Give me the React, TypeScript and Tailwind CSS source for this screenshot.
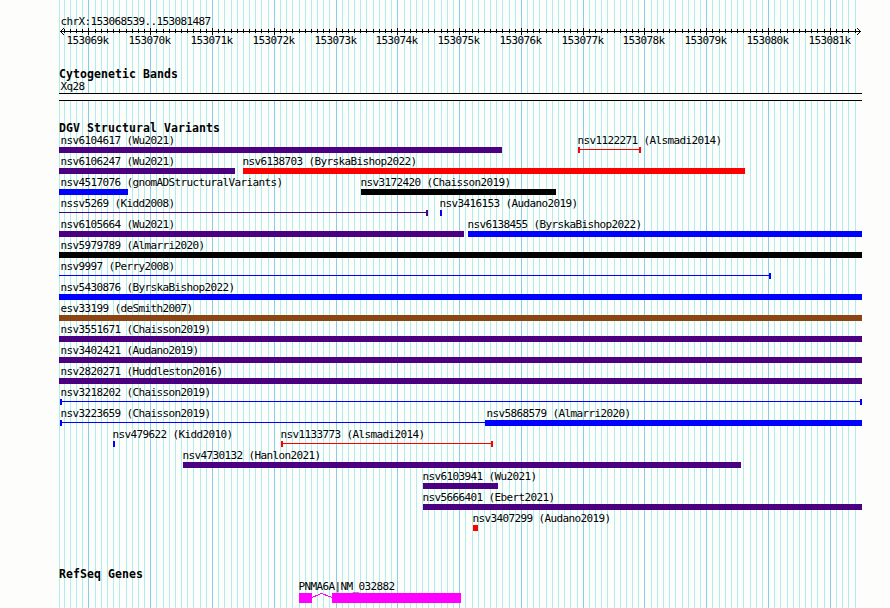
import React from 'react';

interface Feature {
  name: string;
  start: number;
  end: number;
  color: string;
  shape?: 'bar' | 'line';
  capLeft?: boolean;
  capRight?: boolean;
  labelShift?: number;
}

const LEFT = 59;
const RIGHT = 862;

const PURPLE = 'bg-[#4b0082]';
const BLUE = 'bg-[#0000ff]';
const RED = 'bg-[#ff0000]';
const BLACK = 'bg-black';
const BROWN = 'bg-[#8b4513]';

// one entry per 100 bp, starting at 153068500
const gridLines = Array.from({ length: 130 }, (_, i) => {
  const k = i - 5;
  return {
    x: Math.max(LEFT, Math.floor(88.97 + 6.178 * k)),
    major: k % 10 === 0,
    label: `${153069 + k / 10}k`,
  };
});

const majorLines = gridLines.filter((line) => line.major);

const lanes: Feature[][] = [
  [
    { name: 'nsv6104617 (Wu2021)', start: 59, end: 502, color: PURPLE, labelShift: 1.4 },
    { name: 'nsv1122271 (Alsmadi2014)', start: 578, end: 641, color: RED, shape: 'line', capLeft: true, capRight: true },
  ],
  [
    { name: 'nsv6106247 (Wu2021)', start: 59, end: 235, color: PURPLE, labelShift: 1.4 },
    { name: 'nsv6138703 (ByrskaBishop2022)', start: 243, end: 745, color: RED },
  ],
  [
    { name: 'nsv4517076 (gnomADStructuralVariants)', start: 59, end: 128, color: BLUE, labelShift: 1.4 },
    { name: 'nsv3172420 (Chaisson2019)', start: 361, end: 556, color: BLACK },
  ],
  [
    { name: 'nssv5269 (Kidd2008)', start: 59, end: 428, color: PURPLE, shape: 'line', capRight: true, labelShift: 1.4 },
    { name: 'nsv3416153 (Audano2019)', start: 440, end: 442, color: BLUE },
  ],
  [
    { name: 'nsv6105664 (Wu2021)', start: 59, end: 464, color: PURPLE, labelShift: 1.4 },
    { name: 'nsv6138455 (ByrskaBishop2022)', start: 468, end: 862, color: BLUE },
  ],
  [{ name: 'nsv5979789 (Almarri2020)', start: 59, end: 862, color: BLACK, labelShift: 1.4 }],
  [{ name: 'nsv9997 (Perry2008)', start: 59, end: 771, color: BLUE, shape: 'line', capRight: true, labelShift: 1.4 }],
  [{ name: 'nsv5430876 (ByrskaBishop2022)', start: 59, end: 862, color: BLUE, labelShift: 1.4 }],
  [{ name: 'esv33199 (deSmith2007)', start: 59, end: 862, color: BROWN, labelShift: 1.4 }],
  [{ name: 'nsv3551671 (Chaisson2019)', start: 59, end: 862, color: PURPLE, labelShift: 1.4 }],
  [{ name: 'nsv3402421 (Audano2019)', start: 59, end: 862, color: PURPLE, labelShift: 1.4 }],
  [{ name: 'nsv2820271 (Huddleston2016)', start: 59, end: 862, color: PURPLE, labelShift: 1.4 }],
  [{ name: 'nsv3218202 (Chaisson2019)', start: 60, end: 862, color: BLUE, shape: 'line', capLeft: true, capRight: true, labelShift: 0.4 }],
  [
    { name: 'nsv3223659 (Chaisson2019)', start: 60, end: 485, color: BLUE, shape: 'line', capLeft: true, labelShift: 0.4 },
    { name: 'nsv5868579 (Almarri2020)', start: 485, end: 862, color: BLUE, labelShift: 1.4 },
  ],
  [
    { name: 'nsv479622 (Kidd2010)', start: 113, end: 115, color: BLUE },
    { name: 'nsv1133773 (Alsmadi2014)', start: 281, end: 493, color: RED, shape: 'line', capLeft: true, capRight: true },
  ],
  [{ name: 'nsv4730132 (Hanlon2021)', start: 183, end: 741, color: PURPLE }],
  [{ name: 'nsv6103941 (Wu2021)', start: 423, end: 498, color: PURPLE }],
  [{ name: 'nsv5666401 (Ebert2021)', start: 423, end: 862, color: PURPLE }],
  [{ name: 'nsv3407299 (Audano2019)', start: 473, end: 478, color: RED }],
];

function Grid() {
  return (
    <svg className="absolute inset-0" width="890" height="608" shapeRendering="crispEdges">
      {gridLines.map((line) => (
        <rect key={line.x} x={line.x} y="0" width="1" height="608" fill={line.major ? '#87ceeb' : '#afeeee'} />
      ))}
    </svg>
  );
}

function Ruler() {
  return (
    <svg className="block" width="890" height="7" shapeRendering="crispEdges">
      <rect x="60" y="3" width="801" height="1" />
      {gridLines.slice(1).map((line) => (
        <rect key={line.x} x={line.x} y={line.major ? 0 : 1} width="1" height={line.major ? 7 : 4} />
      ))}
      {[1, 2, 3].map((d) => (
        <g key={d}>
          <rect x={60 + d} y={3 - d} width="1" height="1" />
          <rect x={60 + d} y={3 + d} width="1" height="1" />
          <rect x={860 - d} y={3 - d} width="1" height="1" />
          <rect x={860 - d} y={3 + d} width="1" height="1" />
        </g>
      ))}
    </svg>
  );
}

// labels are centred on their major line, 21.5px to each side
function RulerLabels() {
  return (
    <div className="flex h-[13px]">
      {majorLines.map((line, i) => (
        <span
          key={line.x}
          className="shrink-0 w-0 whitespace-nowrap"
          style={{ marginLeft: line.x - (i === 0 ? 21.5 : majorLines[i - 1].x) }}
        >
          {line.label}
        </span>
      ))}
    </div>
  );
}

function TrackTitle({ children }: { children: React.ReactNode }) {
  return (
    <h2 className="pl-[59px] h-[13px] leading-[13px] text-[11.5px] tracking-[0.077px] font-bold whitespace-nowrap">
      {children}
    </h2>
  );
}

function Glyph({ feature }: { feature: Feature }) {
  if (feature.shape === 'line') {
    return (
      <div className="flex h-[6px]">
        {feature.capLeft && <div className={`w-[2px] h-[6px] ${feature.color}`} />}
        <div className={`flex-1 h-px mt-[2px] ${feature.color}`} />
        {feature.capRight && <div className={`w-[2px] h-[6px] ${feature.color}`} />}
      </div>
    );
  }
  return <div className={`h-[6px] ${feature.color}`} />;
}

function Lane({ features }: { features: Feature[] }) {
  return (
    <div className="flex h-[21px]">
      {features.map((feature, i) => (
        <div
          key={feature.name}
          className="shrink-0"
          style={{
            width: feature.end - feature.start,
            marginLeft: feature.start - (i === 0 ? 0 : features[i - 1].end),
          }}
        >
          <div className="h-[13px] whitespace-nowrap" style={{ marginLeft: feature.labelShift ?? -0.6 }}>
            {feature.name}
          </div>
          <Glyph feature={feature} />
        </div>
      ))}
    </div>
  );
}

export default function App() {
  return (
    <div className="relative w-[890px] h-[608px] overflow-hidden bg-[#fdfefc] text-black font-['DejaVu_Sans_Mono','Liberation_Mono',monospace] text-[11px] leading-[13px] tracking-[-0.622px]">
      <Grid />
      <div className="relative flex flex-col">
        <div className="mt-[15px] h-[13px] pl-[60.4px]">chrX:153068539..153081487</div>
        <Ruler />
        <div className="-mt-px">
          <RulerLabels />
        </div>

        <div className="mt-[21px]">
          <TrackTitle>Cytogenetic Bands</TrackTitle>
          <div className="-mt-px h-[13px] pl-[60.4px]">Xq28</div>
          <div
            className="h-[8px] border-y border-black bg-[#fdfefc]"
            style={{ marginLeft: LEFT, width: RIGHT - LEFT }}
          />
        </div>

        <div className="mt-[21px]">
          <TrackTitle>DGV Structural Variants</TrackTitle>
          <div className="-mt-px">
            {lanes.map((features) => (
              <Lane key={features[0].name} features={features} />
            ))}
          </div>
        </div>

        <div className="mt-[35px]">
          <TrackTitle>RefSeq Genes</TrackTitle>
          <div className="-mt-px h-[13px] pl-[298.4px]">PNMA6A|NM_032882</div>
          <div className="flex pl-[299px] h-[10px]">
            <div className="w-[13px] bg-[#ff00ff]" />
            <svg width="20" height="10" fill="none" stroke="#ff00ff" shapeRendering="crispEdges">
              <path d="M0 4.5 L9.5 0.5 L20 4.5" />
            </svg>
            <div className="w-[129px] bg-[#ff00ff]" />
          </div>
        </div>
      </div>
    </div>
  );
}
